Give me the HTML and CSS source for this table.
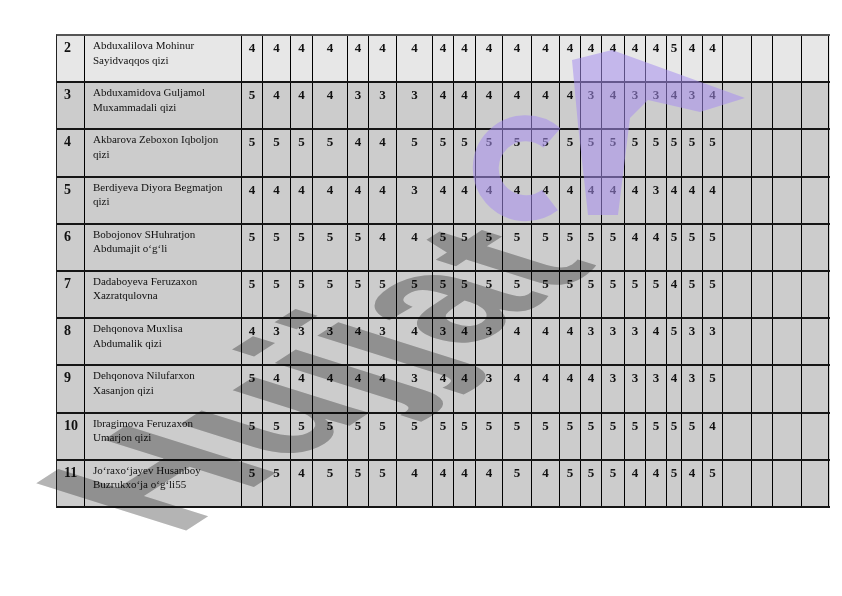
FILE: index.html
```html
<!DOCTYPE html>
<html>
<head>
<meta charset="utf-8">
<link rel="stylesheet" href="styles.css">
</head>
<body>
<div class="page">
  <div class="sheet">
    <div class="row hi"><div class="n">2</div><div class="nm">Abduxalilova Mohinur<br>Sayidvaqqos qizi</div><div class="g">4</div><div class="g">4</div><div class="g">4</div><div class="g">4</div><div class="g">4</div><div class="g">4</div><div class="g">4</div><div class="g">4</div><div class="g">4</div><div class="g">4</div><div class="g">4</div><div class="g">4</div><div class="g">4</div><div class="g">4</div><div class="g">4</div><div class="g">4</div><div class="g">4</div><div class="g">5</div><div class="g">4</div><div class="g">4</div><div class="g"></div><div class="g"></div><div class="g"></div><div class="g"></div></div>
    <div class="row"><div class="n">3</div><div class="nm">Abduxamidova Guljamol<br>Muxammadali qizi</div><div class="g">5</div><div class="g">4</div><div class="g">4</div><div class="g">4</div><div class="g">3</div><div class="g">3</div><div class="g">3</div><div class="g">4</div><div class="g">4</div><div class="g">4</div><div class="g">4</div><div class="g">4</div><div class="g">4</div><div class="g">3</div><div class="g">4</div><div class="g">3</div><div class="g">3</div><div class="g">4</div><div class="g">3</div><div class="g">4</div><div class="g"></div><div class="g"></div><div class="g"></div><div class="g"></div></div>
    <div class="row"><div class="n">4</div><div class="nm">Akbarova Zeboxon Iqboljon<br>qizi</div><div class="g">5</div><div class="g">5</div><div class="g">5</div><div class="g">5</div><div class="g">4</div><div class="g">4</div><div class="g">5</div><div class="g">5</div><div class="g">5</div><div class="g">5</div><div class="g">5</div><div class="g">5</div><div class="g">5</div><div class="g">5</div><div class="g">5</div><div class="g">5</div><div class="g">5</div><div class="g">5</div><div class="g">5</div><div class="g">5</div><div class="g"></div><div class="g"></div><div class="g"></div><div class="g"></div></div>
    <div class="row"><div class="n">5</div><div class="nm">Berdiyeva Diyora Begmatjon<br>qizi</div><div class="g">4</div><div class="g">4</div><div class="g">4</div><div class="g">4</div><div class="g">4</div><div class="g">4</div><div class="g">3</div><div class="g">4</div><div class="g">4</div><div class="g">4</div><div class="g">4</div><div class="g">4</div><div class="g">4</div><div class="g">4</div><div class="g">4</div><div class="g">4</div><div class="g">3</div><div class="g">4</div><div class="g">4</div><div class="g">4</div><div class="g"></div><div class="g"></div><div class="g"></div><div class="g"></div></div>
    <div class="row"><div class="n">6</div><div class="nm">Bobojonov SHuhratjon<br>Abdumajit o‘g‘li</div><div class="g">5</div><div class="g">5</div><div class="g">5</div><div class="g">5</div><div class="g">5</div><div class="g">4</div><div class="g">4</div><div class="g">5</div><div class="g">5</div><div class="g">5</div><div class="g">5</div><div class="g">5</div><div class="g">5</div><div class="g">5</div><div class="g">5</div><div class="g">4</div><div class="g">4</div><div class="g">5</div><div class="g">5</div><div class="g">5</div><div class="g"></div><div class="g"></div><div class="g"></div><div class="g"></div></div>
    <div class="row"><div class="n">7</div><div class="nm">Dadaboyeva Feruzaxon<br>Xazratqulovna</div><div class="g">5</div><div class="g">5</div><div class="g">5</div><div class="g">5</div><div class="g">5</div><div class="g">5</div><div class="g">5</div><div class="g">5</div><div class="g">5</div><div class="g">5</div><div class="g">5</div><div class="g">5</div><div class="g">5</div><div class="g">5</div><div class="g">5</div><div class="g">5</div><div class="g">5</div><div class="g">4</div><div class="g">5</div><div class="g">5</div><div class="g"></div><div class="g"></div><div class="g"></div><div class="g"></div></div>
    <div class="row"><div class="n">8</div><div class="nm">Dehqonova Muxlisa<br>Abdumalik qizi</div><div class="g">4</div><div class="g">3</div><div class="g">3</div><div class="g">3</div><div class="g">4</div><div class="g">3</div><div class="g">4</div><div class="g">3</div><div class="g">4</div><div class="g">3</div><div class="g">4</div><div class="g">4</div><div class="g">4</div><div class="g">3</div><div class="g">3</div><div class="g">3</div><div class="g">4</div><div class="g">5</div><div class="g">3</div><div class="g">3</div><div class="g"></div><div class="g"></div><div class="g"></div><div class="g"></div></div>
    <div class="row"><div class="n">9</div><div class="nm">Dehqonova Nilufarxon<br>Xasanjon qizi</div><div class="g">5</div><div class="g">4</div><div class="g">4</div><div class="g">4</div><div class="g">4</div><div class="g">4</div><div class="g">3</div><div class="g">4</div><div class="g">4</div><div class="g">3</div><div class="g">4</div><div class="g">4</div><div class="g">4</div><div class="g">4</div><div class="g">3</div><div class="g">3</div><div class="g">3</div><div class="g">4</div><div class="g">3</div><div class="g">5</div><div class="g"></div><div class="g"></div><div class="g"></div><div class="g"></div></div>
    <div class="row"><div class="n">10</div><div class="nm">Ibragimova Feruzaxon<br>Umarjon qizi</div><div class="g">5</div><div class="g">5</div><div class="g">5</div><div class="g">5</div><div class="g">5</div><div class="g">5</div><div class="g">5</div><div class="g">5</div><div class="g">5</div><div class="g">5</div><div class="g">5</div><div class="g">5</div><div class="g">5</div><div class="g">5</div><div class="g">5</div><div class="g">5</div><div class="g">5</div><div class="g">5</div><div class="g">5</div><div class="g">4</div><div class="g"></div><div class="g"></div><div class="g"></div><div class="g"></div></div>
    <div class="row"><div class="n">11</div><div class="nm">Jo‘raxo‘jayev Husanboy<br>Buzrukxo‘ja o‘g‘li55</div><div class="g">5</div><div class="g">5</div><div class="g">4</div><div class="g">5</div><div class="g">5</div><div class="g">5</div><div class="g">4</div><div class="g">4</div><div class="g">4</div><div class="g">4</div><div class="g">5</div><div class="g">4</div><div class="g">5</div><div class="g">5</div><div class="g">5</div><div class="g">4</div><div class="g">4</div><div class="g">5</div><div class="g">4</div><div class="g">5</div><div class="g"></div><div class="g"></div><div class="g"></div><div class="g"></div></div>
  </div>
  <svg class="wm" width="842" height="596" viewBox="0 0 842 596">
    <text class="wm-gray" x="0" y="0" transform="translate(176 537) scale(1 0.45) rotate(-55)">Hujjat</text>
  </svg>
  <svg class="wm-logo" width="842" height="596" viewBox="0 0 842 596">
    <path class="wm-purple-stroke" d="M 552 138 A 40 40 0 1 0 550 200"/>
    <polygon class="wm-purple" points="572,60 612,50 745,98 700,112 648,100 630,118 618,215 588,215 578,125"/>
  </svg>
</div>
</body>
</html>
```
FILE: styles.css
```css
html, body {
  margin: 0;
  padding: 0;
  background: #ffffff;
}
.page {
  position: relative;
  width: 842px;
  height: 596px;
  background: #ffffff;
  isolation: isolate;
  overflow: hidden;
  padding: 34px 0 0 56px;
  box-sizing: border-box;
  font-family: "Liberation Serif", "Times New Roman", serif;
  color: #111;
}
.sheet {
  width: 773px;
  border-left: 1px solid #222;
  border-top: 2px solid #555;
}
.row {
  display: grid;
  grid-template-columns: 28px 157px 21px 28px 22px 35px 21px 28px 36px 21px 22px 27px 29px 28px 21px 21px 23px 21px 21px 15px 21px 20px 29px 21px 29px 27px;
  height: 47.2px;
  box-sizing: border-box;
  border-bottom: 2px solid #151515;
  background: #cccccc;
}
.row.hi {
  background: #e7e7e7;
}
.row > div {
  border-right: 1px solid #000;
  box-sizing: border-box;
  overflow: hidden;
}
.n {
  font-weight: 700;
  font-size: 14px;
  line-height: 16px;
  padding: 4px 0 0 7px;
}
.nm {
  font-size: 11px;
  line-height: 14.5px;
  padding: 2px 0 0 8px;
  white-space: nowrap;
}
.g {
  font-weight: 700;
  font-size: 13px;
  line-height: 15px;
  padding-top: 4px;
  text-align: center;
}
.wm {
  position: absolute;
  left: 0;
  top: 0;
  pointer-events: none;
  mix-blend-mode: multiply;
}
.wm-logo {
  position: absolute;
  left: 0;
  top: 0;
  pointer-events: none;
  opacity: 0.55;
}
.wm-gray {
  font-family: "Liberation Sans", Arial, sans-serif;
  font-weight: 700;
  font-size: 266px;
  fill: #b4b4b4;
}
.wm-purple {
  fill: #a890f0;
}
.wm-purple-stroke {
  fill: none;
  stroke: #a890f0;
  stroke-width: 26;
}
```
